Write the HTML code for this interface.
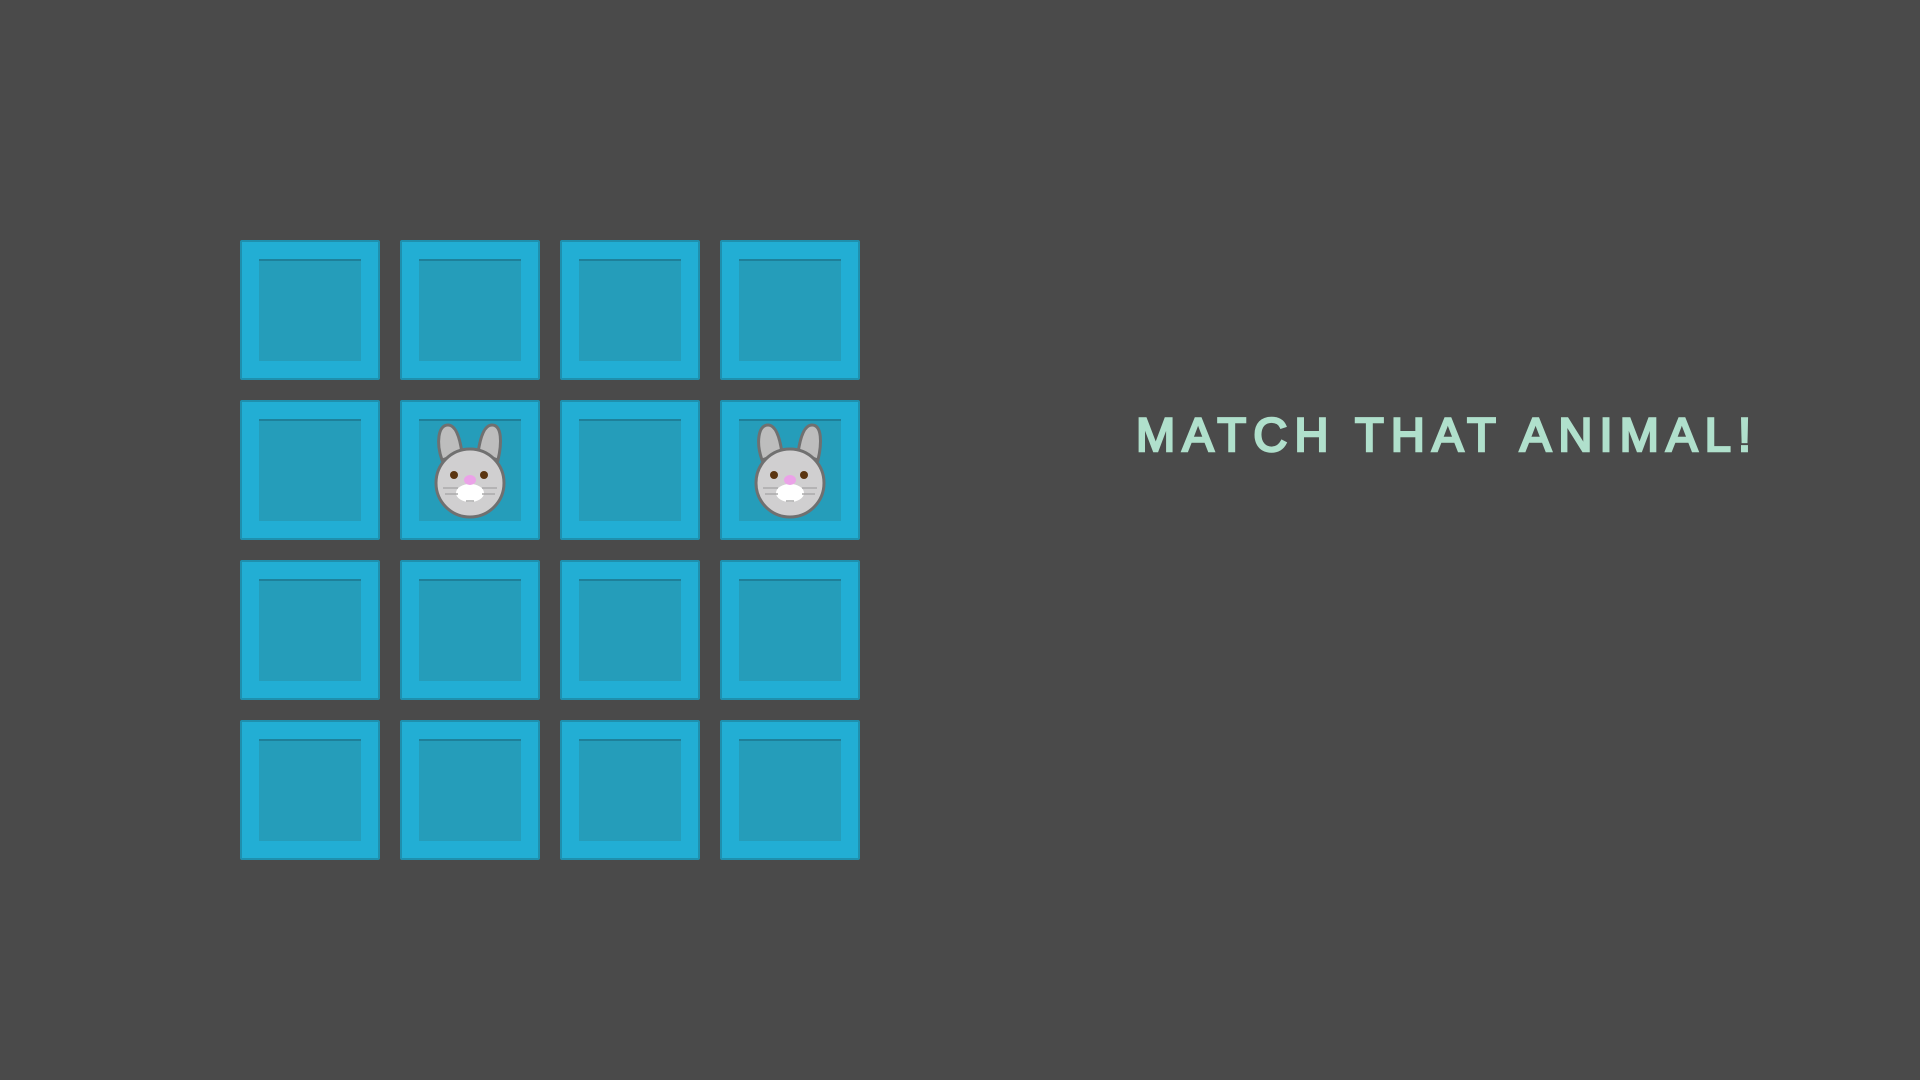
<!DOCTYPE html>
<html><head><style>
body{margin:0;width:1920px;height:1080px;background:#4a4a4a;position:relative;overflow:hidden}
.t{position:absolute;width:136px;height:136px;background:#22aed4;border:2px solid #1f90ae;border-radius:2px;box-sizing:content-box}
.t::after{content:"";position:absolute;left:17px;top:17px;width:102px;height:100px;background:#259dba;border-top:2px solid #1e809a}
.b{position:absolute;z-index:2}
h1{position:absolute;left:1136px;top:407px;margin:0;font:47px "Liberation Sans",sans-serif;-webkit-text-stroke:2.5px #b0e0cc;color:#b0e0cc;letter-spacing:7.2px;white-space:nowrap}
</style></head><body>
<div class="t" style="left:240px;top:240px"></div><div class="t" style="left:400px;top:240px"></div><div class="t" style="left:560px;top:240px"></div><div class="t" style="left:720px;top:240px"></div>
<div class="t" style="left:240px;top:400px"></div><div class="t" style="left:400px;top:400px"></div><div class="t" style="left:560px;top:400px"></div><div class="t" style="left:720px;top:400px"></div>
<div class="t" style="left:240px;top:560px"></div><div class="t" style="left:400px;top:560px"></div><div class="t" style="left:560px;top:560px"></div><div class="t" style="left:720px;top:560px"></div>
<div class="t" style="left:240px;top:720px"></div><div class="t" style="left:400px;top:720px"></div><div class="t" style="left:560px;top:720px"></div><div class="t" style="left:720px;top:720px"></div>
<svg class="b" style="left:430px;top:415px" width="80" height="105" viewBox="0 0 80 105">
<g stroke="#707070" stroke-width="3">
<path d="M12 45 C6 28 8 10 18 10 C26 10 30 24 32 38 Z" fill="#bdbdbd"/>
<path d="M48 38 C50 24 54 10 62 10 C72 10 72 28 68 45 Z" fill="#bdbdbd"/>
<circle cx="40" cy="68" r="34" fill="#d0cfd0"/>
</g>
<ellipse cx="40" cy="78" rx="14" ry="9" fill="#fff"/>
<circle cx="24" cy="60" r="4" fill="#5a3510"/><circle cx="54" cy="60" r="4" fill="#5a3510"/>
<ellipse cx="40" cy="65" rx="6" ry="5" fill="#eba2e8"/>
<g stroke="#aaa" stroke-width="1.5"><path d="M13 73h15M15 79h13M52 73h15M52 79h13M36 86h8"/></g>
</svg>
<svg class="b" style="left:750px;top:415px" width="80" height="105" viewBox="0 0 80 105">
<g stroke="#707070" stroke-width="3">
<path d="M12 45 C6 28 8 10 18 10 C26 10 30 24 32 38 Z" fill="#bdbdbd"/>
<path d="M48 38 C50 24 54 10 62 10 C72 10 72 28 68 45 Z" fill="#bdbdbd"/>
<circle cx="40" cy="68" r="34" fill="#d0cfd0"/>
</g>
<ellipse cx="40" cy="78" rx="14" ry="9" fill="#fff"/>
<circle cx="24" cy="60" r="4" fill="#5a3510"/><circle cx="54" cy="60" r="4" fill="#5a3510"/>
<ellipse cx="40" cy="65" rx="6" ry="5" fill="#eba2e8"/>
<g stroke="#aaa" stroke-width="1.5"><path d="M13 73h15M15 79h13M52 73h15M52 79h13M36 86h8"/></g>
</svg>
<h1>MATCH THAT ANIMAL!</h1>
</body></html>
